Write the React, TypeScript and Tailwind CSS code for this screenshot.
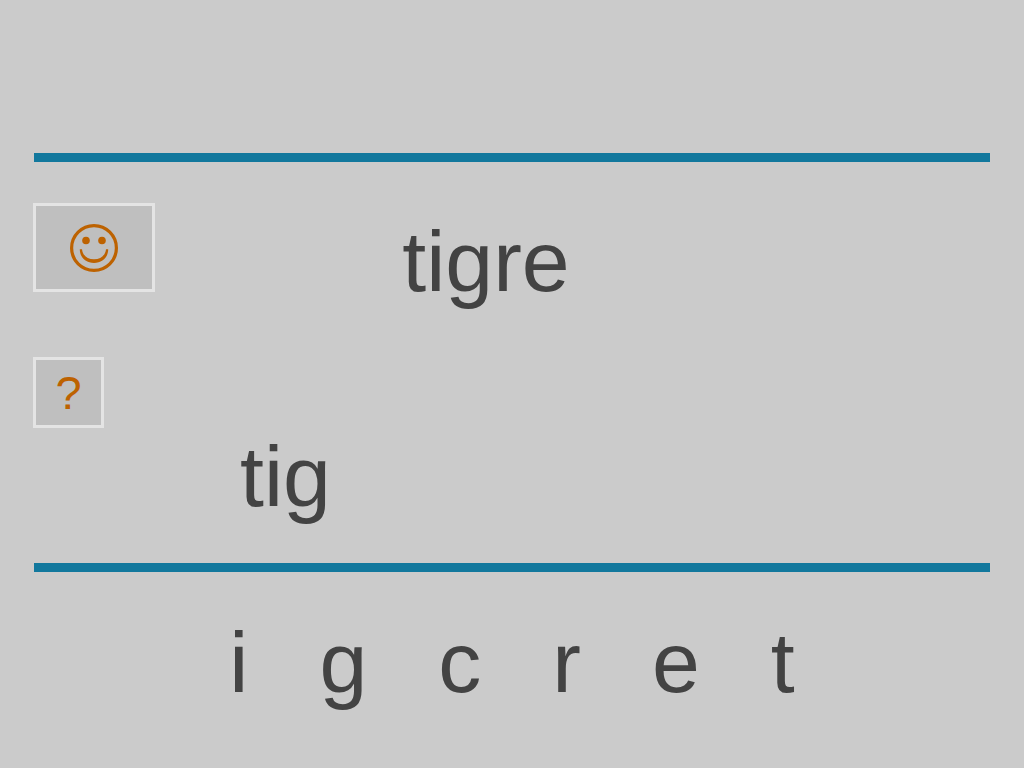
import { useState } from "react";

const WORD = "tigre";
const LETTERS = ["i", "g", "c", "r", "e", "t"];

function SmileyIcon() {
  return (
    <svg viewBox="0 0 48 48" className="h-12 w-12" fill="none" aria-hidden="true">
      <circle cx="24" cy="24" r="22.4" stroke="#bd6200" strokeWidth="3.2" />
      <circle cx="16" cy="16.5" r="3.8" fill="#bd6200" />
      <circle cx="32" cy="16.5" r="3.8" fill="#bd6200" />
      <path
        d="M9.8 25.2H12C12.6 31.4 17.4 35.3 24 35.3S35.4 31.4 36 25.2H38.2C38.2 33.4 32.2 39 24 39S9.8 33.4 9.8 25.2Z"
        fill="#bd6200"
      />
    </svg>
  );
}

function Rule() {
  return <hr className="mx-[34px] h-[9px] border-0 bg-[#12789d]" />;
}

export default function App() {
  const [typed, setTyped] = useState("tig");

  return (
    <div className="min-h-screen bg-[#cbcbcb] pt-[153px] font-['Liberation_Sans',Arial,sans-serif] text-[86px] leading-[96px] text-[#434343]">
      <Rule />

      <main className="flex px-[33px] pt-[41px] pb-[39px]">
        <div className="flex w-[207px] shrink-0 flex-col items-start gap-[65px]">
          <button
            type="button"
            aria-label="Check"
            className="flex h-[89px] w-[122px] items-center justify-center border-3 border-[#e4e4e4] bg-[#bfbfbf]"
          >
            <SmileyIcon />
          </button>
          <button
            type="button"
            onClick={() => setTyped("")}
            className="flex h-[71px] w-[71px] items-center justify-center border-3 border-[#e4e4e4] bg-[#bfbfbf] text-[47px] leading-[56px] text-[#bd6200]"
          >
            ?
          </button>
        </div>

        <div className="flex flex-1 flex-col gap-[119px] pt-[10px] pr-[259px]">
          <p className="text-center">{WORD}</p>
          <p className="min-h-[96px]">{typed}</p>
        </div>
      </main>

      <Rule />

      <div className="flex justify-center gap-[71px] pt-[42px]">
        {LETTERS.map((letter) => (
          <button key={letter} type="button" onClick={() => setTyped(typed + letter)}>
            {letter}
          </button>
        ))}
      </div>
    </div>
  );
}
